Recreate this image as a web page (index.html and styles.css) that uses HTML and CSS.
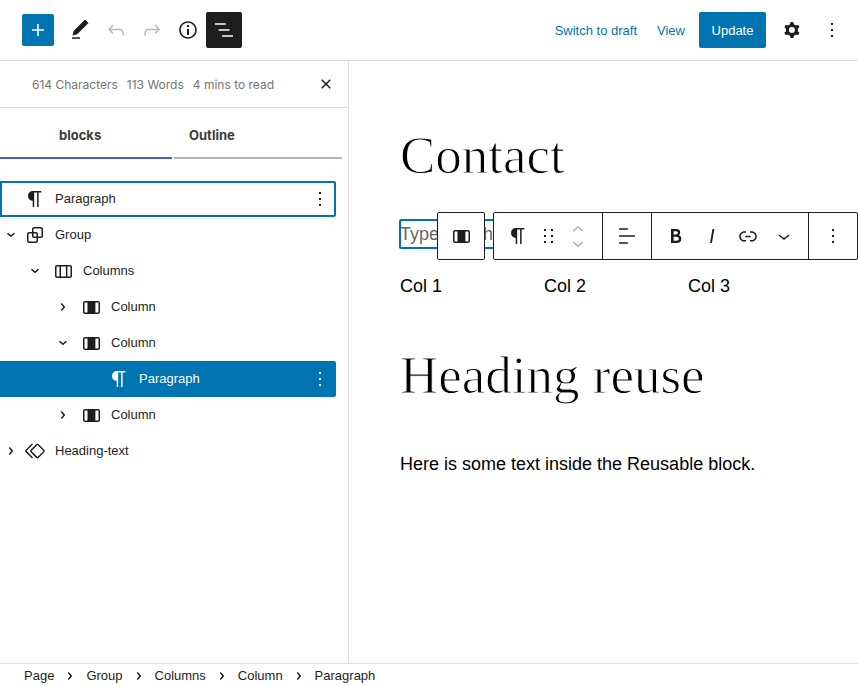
FILE: index.html
```html
<!DOCTYPE html>
<html lang="en">
<head>
<meta charset="utf-8">
<meta name="viewport" content="width=device-width, initial-scale=1">
<title>Edit Page</title>
<link rel="stylesheet" href="styles.css">
</head>
<body>
<svg class="sprite" aria-hidden="true">
  <symbol id="more" viewBox="0 0 24 24"><path d="M13 19h-2v-2h2v2zm0-6h-2v-2h2v2zm0-6h-2V5h2v2z"/></symbol>
  <symbol id="chevron" viewBox="0 0 24 24"><path d="M10.86 8.04L14.28 12.03L10.86 16.02L9.72 15.04L12.3 12.03L9.72 9.02z"/></symbol>
  <symbol id="paragraph" viewBox="0 0 24 24"><path d="M18.3 4H9.9v-.1l-.9.2c-2.3.4-4 2.4-4 4.8s1.7 4.4 4 4.8l.7.1V20h1.5V5.5h2.9V20h1.5V5.5h2.7V4z"/></symbol>
  <symbol id="column" viewBox="0 0 24 24"><path fill-rule="evenodd" d="M19 6H6c-1.1 0-2 .9-2 2v9c0 1.1.9 2 2 2h13c1.1 0 2-.9 2-2V8c0-1.1-.9-2-2-2zM5.500 17V8c0-.3.2-.5.5-.5h2.500v10H6c-.3 0-.5-.2-.5-.5zm14 0c0 .3-.2.5-.5.5h-2.600v-10H19c.3 0 .5.2.5.5v9z"/></symbol>
</svg>
<div class="editor">
  <header class="topbar">
    <div class="tools">
      <button class="inserter" aria-label="Add block"><svg viewBox="0 0 24 24"><path d="M18 11.2h-5.200V6h-1.600v5.200H6v1.600h5.200V18h1.600v-5.200H18z"/></svg></button>
      <button class="tool" aria-label="Tools"><svg viewBox="0 0 24 24"><path d="M20.1 5.100L16.900 2 6.200 12.700l-1.300 4.400 4.500-1.300L20.100 5.100z" stroke="currentColor" stroke-width=".8" stroke-linejoin="round"/><path d="M4 20.800h8v-1.500H4v1.500z"/></svg></button>
      <button class="tool faded" aria-label="Undo"><svg viewBox="0 0 24 24"><path d="M18.3 11.7c-.6-.6-1.400-.9-2.300-.9H6.700l2.900-3.300-1.100-1-4.500 5L8.500 16l1-1-2.700-2.700H16c.5 0 .9.2 1.300.5 1 1 1 3.400 1 4.500v.3h1.500v-.2c0-1.500 0-4.300-1.500-5.700z"/></svg></button>
      <button class="tool faded" aria-label="Redo"><svg viewBox="0 0 24 24"><path d="M15.600 6.500l-1.100 1 2.900 3.300H8c-.9 0-1.700.3-2.300.9-1.400 1.500-1.400 4.200-1.400 5.600v.2h1.500v-.3c0-1.100 0-3.500 1-4.500.3-.3.7-.5 1.300-.5h9.200L14.500 15l1.100 1.100 4.600-4.600-4.600-5z"/></svg></button>
      <button class="tool" aria-label="Details"><svg viewBox="0 0 24 24"><path d="M12 3.200c-4.800 0-8.800 3.900-8.800 8.800 0 4.800 3.900 8.800 8.800 8.800 4.800 0 8.800-3.900 8.800-8.800 0-4.800-4-8.800-8.800-8.800zm0 16c-4 0-7.200-3.300-7.200-7.200C4.800 8 8 4.800 12 4.800s7.200 3.300 7.200 7.200c0 4-3.200 7.200-7.200 7.200zM11 17h2v-6h-2v6zm0-8h2V7h-2v2z"/></svg></button>
      <button class="tool pressed" aria-label="List view" aria-pressed="true"><svg viewBox="0 0 24 24"><path d="M13.800 5.200H3v1.500h10.800V5.200zm-3.600 12v1.500H21v-1.500H10.200zm7.200-6H6.600v1.500h10.800v-1.500z"/></svg></button>
    </div>
    <div class="actions">
      <button class="text-button">Switch to draft</button>
      <a class="text-button" href="#view">View</a>
      <button class="update">Update</button>
      <button class="tool cog" aria-label="Settings"><svg viewBox="0 0 24 24"><path fill-rule="evenodd" d="M10.289 4.836A1 1 0 0111.275 4h1.306a1 1 0 01.987.836l.244 1.466c.787.26 1.503.679 2.108 1.218l1.393-.522a1 1 0 011.216.437l.653 1.13a1 1 0 01-.23 1.273l-1.148.944a6.025 6.025 0 010 2.435l1.149.946a1 1 0 01.23 1.272l-.653 1.13a1 1 0 01-1.216.437l-1.394-.522c-.605.54-1.32.958-2.108 1.218l-.244 1.466a1 1 0 01-.987.836h-1.306a1 1 0 01-.986-.836l-.244-1.466a5.995 5.995 0 01-2.108-1.218l-1.394.522a1 1 0 01-1.217-.436l-.653-1.131a1 1 0 01.23-1.272l1.149-.946a6.026 6.026 0 010-2.435l-1.148-.944a1 1 0 01-.23-1.272l.653-1.131a1 1 0 011.217-.437l1.393.522a5.994 5.994 0 012.108-1.218l.244-1.466zM14.929 12a3 3 0 11-6 0 3 3 0 016 0z"/></svg></button>
      <button class="tool" aria-label="Options"><svg><use href="#more"/></svg></button>
    </div>
  </header>

  <div class="body">
    <aside class="sidebar">
      <div class="stats">
        <span>614 Characters</span><span>113 Words</span><span>4 mins to read</span>
        <button class="close" aria-label="Close"><svg viewBox="0 0 24 24"><path d="M12 13.060l3.712 3.713 1.061-1.060L13.061 12l3.712-3.712-1.060-1.060L12 10.938 8.288 7.227l-1.061 1.060L10.939 12l-3.712 3.712 1.060 1.061L12 13.061z"/></svg></button>
      </div>
      <div class="tabs" role="tablist">
        <button class="tab active" role="tab" aria-selected="true">blocks</button>
        <button class="tab" role="tab" aria-selected="false">Outline</button>
      </div>
      <ul class="tree">
        <li class="row outlined"><span class="toggle"></span><a href="#b1"><svg><use href="#paragraph"/></svg>Paragraph</a><button class="row-more" aria-label="Options"><svg><use href="#more"/></svg></button></li>
        <li class="row"><button class="toggle open" aria-label="Collapse"><svg><use href="#chevron"/></svg></button><a href="#b2"><svg viewBox="0 0 24 24"><path d="M18 4h-7c-1.100 0-2 .9-2 2v3H6c-1.100 0-2 .9-2 2v7c0 1.100.9 2 2 2h7c1.100 0 2-.9 2-2v-3h3c1.100 0 2-.9 2-2V6c0-1.100-.9-2-2-2zm-4.500 14c0 .3-.2.5-.5.5H6c-.3 0-.5-.2-.5-.5v-7c0-.3.2-.5.5-.5h3V13c0 1.100.9 2 2 2h2.500v3zm0-4.500H11c-.3 0-.5-.2-.5-.5v-2.500H13c.3 0 .5.2.5.5v2.500zm5-.5c0 .3-.2.5-.5.5h-3V11c0-1.100-.9-2-2-2h-2.500V6c0-.3.2-.5.5-.5h7c.3 0 .5.2.5.5v7z"/></svg>Group</a></li>
        <li class="row level-2"><button class="toggle open" aria-label="Collapse"><svg><use href="#chevron"/></svg></button><a href="#b3"><svg viewBox="0 0 24 24"><path d="M19 6H6c-1.100 0-2 .9-2 2v9c0 1.100.9 2 2 2h13c1.100 0 2-.9 2-2V8c0-1.100-.9-2-2-2zm-4.100 1.500v10H10v-10h4.900zM5.500 17V8c0-.3.2-.5.5-.5h2.500v10H6c-.3 0-.5-.2-.5-.5zm14 0c0 .3-.2.5-.5.5h-2.600v-10H19c.3 0 .5.2.5.5v9z"/></svg>Columns</a></li>
        <li class="row level-3"><button class="toggle" aria-label="Expand"><svg><use href="#chevron"/></svg></button><a href="#b4"><svg><use href="#column"/></svg>Column</a></li>
        <li class="row level-3"><button class="toggle open" aria-label="Collapse"><svg><use href="#chevron"/></svg></button><a href="#b5"><svg><use href="#column"/></svg>Column</a></li>
        <li class="row level-4 selected"><span class="toggle"></span><a href="#b6"><svg><use href="#paragraph"/></svg>Paragraph</a><button class="row-more" aria-label="Options"><svg><use href="#more"/></svg></button></li>
        <li class="row level-3"><button class="toggle" aria-label="Expand"><svg><use href="#chevron"/></svg></button><a href="#b7"><svg><use href="#column"/></svg>Column</a></li>
        <li class="row"><button class="toggle" aria-label="Expand"><svg><use href="#chevron"/></svg></button><a href="#b8"><svg viewBox="0 0 24 24"><path d="M21.300 10.800l-5.600-5.600c-.7-.7-1.800-.7-2.500 0l-5.600 5.600c-.7.7-.7 1.800 0 2.500l5.600 5.600c.3.3.8.5 1.200.5s.9-.2 1.200-.5l5.600-5.600c.8-.7.8-1.900.1-2.500zm-1 1.400l-5.600 5.600c-.1.1-.3.1-.4 0l-5.600-5.600c-.1-.1-.1-.3 0-.4l5.600-5.600s.1-.1.2-.1.1 0 .2.1l5.600 5.600c.1.1.1.3 0 .4zm-16.600-.4L10 5.500l-1-1-6.300 6.300c-.7.7-.7 1.800 0 2.500L9 19.500l1.100-1.100-6.300-6.300c-.2 0-.2-.2-.1-.3z"/></svg>Heading-text</a></li>
      </ul>
    </aside>

    <main class="canvas">
      <h1>Contact</h1>
      <div class="block-wrap">
        <p class="placeholder">Type / to choose a block</p>
        <div class="toolbars">
          <div class="bar"><button class="tb" aria-label="Select parent"><svg><use href="#column"/></svg></button></div>
          <div class="bar">
            <div class="segment block-segment">
              <button class="tb-narrow" aria-label="Paragraph"><svg><use href="#paragraph"/></svg></button>
              <button class="tb-narrow" aria-label="Drag"><svg viewBox="0 0 24 24"><path d="M8 5h2v2H8zM15 5h2v2h-2zM8 11h2v2H8zM15 11h2v2h-2zM8 17h2v2H8zM15 17h2v2h-2z"/></svg></button>
              <div class="mover">
                <button aria-label="Move up"><svg viewBox="6 7 12 7"><path d="M6.500 12.400L12 8l5.500 4.400-.9 1.200L12 10l-4.500 3.600-1-1.200z"/></svg></button>
                <button aria-label="Move down"><svg viewBox="6 10 12 7"><path d="M17.500 11.600L12 16l-5.500-4.400.9-1.200L12 14l4.500-3.600 1 1.200z"/></svg></button>
              </div>
            </div>
            <div class="segment"><button class="tb" aria-label="Align"><svg viewBox="0 0 24 24"><path d="M4 19.800h8.900v-1.500H4v1.500zm8.900-15.600H4v1.500h8.900V4.200zm-8.900 7v1.500h16v-1.500H4z"/></svg></button></div>
            <div class="segment format-segment">
              <button class="tb-format" aria-label="Bold"><svg viewBox="0 0 24 24"><path d="M14.700 11.300c1-.6 1.500-1.600 1.500-3 0-2.300-1.300-3.400-4-3.400H7v14h5.800c1.400 0 2.500-.3 3.300-1 .8-.7 1.200-1.700 1.200-2.900.1-1.900-.8-3.100-2.600-3.700zm-5.100-4h2.300c.6 0 1.100.1 1.400.4.3.3.5.7.5 1.200s-.2 1-.5 1.200c-.3.3-.8.4-1.400.4H9.600V7.300zm4.600 9c-.4.3-1 .4-1.700.4H9.600v-3.900h2.900c.7 0 1.300.2 1.700.5.4.3.6.8.6 1.500s-.2 1.200-.6 1.500z"/></svg></button>
              <button class="tb-format" aria-label="Italic"><svg viewBox="0 0 24 24"><path d="M12.500 5L10 19h1.900l2.500-14z"/></svg></button>
              <button class="tb-format" aria-label="Link"><svg viewBox="0 0 24 24"><path d="M15.600 7.200H14v1.500h1.600c2 0 3.700 1.700 3.700 3.700s-1.700 3.700-3.700 3.700H14v1.500h1.600c2.800 0 5.200-2.300 5.200-5.200 0-2.900-2.300-5.200-5.200-5.200zM4.700 12.400c0-2 1.700-3.700 3.700-3.700H10V7.200H8.400c-2.900 0-5.200 2.300-5.200 5.200 0 2.900 2.300 5.200 5.200 5.200H10v-1.500H8.400c-2 0-3.700-1.700-3.700-3.700zm4.600.9h5.300v-1.500H9.300v1.500z"/></svg></button>
              <button class="tb-format" aria-label="More formatting"><svg viewBox="0 0 24 24"><path d="M17.500 11.600L12 16l-5.500-4.400.9-1.200L12 14l4.500-3.600 1 1.200z"/></svg></button>
            </div>
            <div class="segment"><button class="tb" aria-label="Options"><svg><use href="#more"/></svg></button></div>
          </div>
        </div>
      </div>
      <div class="columns"><p>Col 1</p><p>Col 2</p><p>Col 3</p></div>
      <h2>Heading reuse</h2>
      <p>Here is some text inside the Reusable block.</p>
    </main>
  </div>

  <footer>
    <nav class="crumbs" aria-label="Block breadcrumb">
      <a href="#page">Page</a><svg><use href="#chevron"/></svg><a href="#group">Group</a><svg><use href="#chevron"/></svg><a href="#columns">Columns</a><svg><use href="#chevron"/></svg><a href="#column-block">Column</a><svg><use href="#chevron"/></svg><span>Paragraph</span>
    </nav>
  </footer>
</div>
</body>
</html>
```
FILE: styles.css
```css
* {
  box-sizing: border-box;
}

body {
  margin: 0;
  background: #fff;
  color: #1e1e1e;
  font: 13px/20px "Liberation Sans", Arial, sans-serif;
}

button {
  margin: 0;
  padding: 0;
  border: 0;
  background: none;
  color: inherit;
  font: inherit;
}

a {
  color: inherit;
  text-decoration: none;
}

svg {
  display: block;
  flex: none;
  width: 24px;
  height: 24px;
  fill: currentColor;
}

.sprite {
  display: none;
}

.editor {
  display: flex;
  flex-direction: column;
  min-height: 100vh;
}

/* Top bar */
.topbar {
  display: flex;
  align-items: center;
  justify-content: space-between;
  padding: 12px 8px 12px 22px;
  border-bottom: 1px solid #ddd;
}

.tools,
.actions {
  display: flex;
  align-items: center;
}

.inserter,
.tool {
  display: flex;
  align-items: center;
  justify-content: center;
  border-radius: 2px;
}

.inserter {
  width: 32px;
  height: 32px;
  margin-right: 8px;
  background: #0073b1;
  color: #fff;
}

.tool {
  width: 36px;
  height: 36px;
}

.faded {
  color: #b8b8b8;
}

.pressed {
  background: #1e1e1e;
  color: #fff;
}

.text-button {
  margin-right: 20px;
  padding-top: 2px;
  color: #0073b1;
}

.text-button + .update {
  margin-left: -6px;
}

.update {
  min-width: 67px;
  height: 36px;
  margin-right: 8px;
  padding: 2px 12px 0;
  border-radius: 2px;
  background: #0073b1;
  color: #fff;
}

.cog {
  margin-right: 4px;
}

/* Sidebar */
.body {
  display: flex;
  flex: 1;
}

.sidebar {
  flex: none;
  width: 349px;
  border-right: 1px solid #ddd;
}

.stats {
  display: flex;
  align-items: center;
  gap: 9px;
  padding: 10px 10px 10px 32px;
  border-bottom: 1px solid #ddd;
  color: #757575;
  font: 12px/24px Inter, "Liberation Sans", sans-serif;
}

.stats span {
  padding-top: 2px;
}

.close {
  margin-left: auto;
  color: #1e1e1e;
}

.tabs {
  display: grid;
  grid-template-columns: 43fr 42fr;
  gap: 2px;
  margin-right: 6px;
}

.tab {
  height: 51px;
  padding: 4px 15px 0;
  border-bottom: 2px solid #b5b2b5;
  color: #3c3c3c;
  font: bold 13px/20px Inter, "Liberation Sans", sans-serif;
  text-align: left;
}

.tab.active {
  padding-left: 59px;
  border-color: #4560c4;
}

.tree {
  margin: 22px 12px 0 0;
  padding: 0;
  list-style: none;
}

.row {
  display: flex;
  align-items: center;
  height: 36px;
  border-radius: 0 2px 2px 0;
}

.row a {
  display: flex;
  flex: 1;
  align-items: center;
  gap: 8px;
}

.toggle {
  flex: none;
  width: 23px;
}

.toggle.open svg {
  transform: rotate(90deg);
}

.toggle svg {
  margin-left: -1px;
}

.level-2 {
  padding-left: 24px;
}

.level-3 {
  padding-left: 52px;
}

.level-4 {
  padding-left: 80px;
}

.level-2 .toggle,
.level-3 .toggle,
.level-4 .toggle {
  margin-right: 4px;
}

.row-more {
  margin-right: 4px;
}

.outlined {
  box-shadow: inset 0 0 0 2px #0073b1;
}

.selected {
  background: #0073b1;
  color: #fff;
}

/* Canvas */
.canvas {
  flex: 1;
  min-width: 0;
  padding: 62px 26px 20px 51px;
  color: #000;
  font-size: 18px;
  line-height: 28px;
}

.canvas p {
  margin: 0;
}

/* The white stroke trims the glyph edges for a light weight */
h1,
h2 {
  margin: 0;
  font: 53px/64px "Liberation Serif", serif;
  -webkit-text-stroke: 1px #fff;
}

h1 {
  margin-bottom: 33px;
}

h2 {
  margin: 43px 0;
}

.block-wrap {
  position: relative;
}

.canvas .placeholder {
  border-radius: 1px;
  outline: 2px solid #0073b1;
  outline-offset: -1px;
  color: #666;
}

.toolbars {
  position: absolute;
  top: -8px;
  left: 37px;
  display: flex;
  gap: 8px;
  color: #1e1e1e;
}

.bar {
  display: flex;
  height: 48px;
  border: 1px solid #1e1e1e;
  border-radius: 2px;
  background: #fff;
}

.segment {
  display: flex;
  align-items: center;
}

.segment + .segment {
  border-left: 1px solid #1e1e1e;
}

.bar button {
  display: flex;
  align-items: center;
  justify-content: center;
}

.tb {
  width: 48px;
}

.bar:first-child .tb {
  width: 46px;
}

.block-segment {
  padding: 0 9px;
}

.tb-narrow,
.mover {
  width: 30px;
}

.mover {
  display: flex;
  flex-direction: column;
  align-items: center;
  gap: 9px;
  color: #b0b0b0;
}

.mover svg {
  width: 12px;
  height: 7px;
}

.format-segment {
  padding: 0 6px;
}

.tb-format {
  width: 36px;
}

.columns {
  display: grid;
  grid-template-columns: repeat(3, 112px);
  gap: 32px;
  margin-top: 24px;
}

/* Footer */
footer {
  padding: 0 24px;
  border-top: 1px solid #ddd;
}

.crumbs {
  display: flex;
  align-items: center;
  gap: 4px;
  height: 22px;
  padding-top: 2px;
  line-height: 20px;
}
```
